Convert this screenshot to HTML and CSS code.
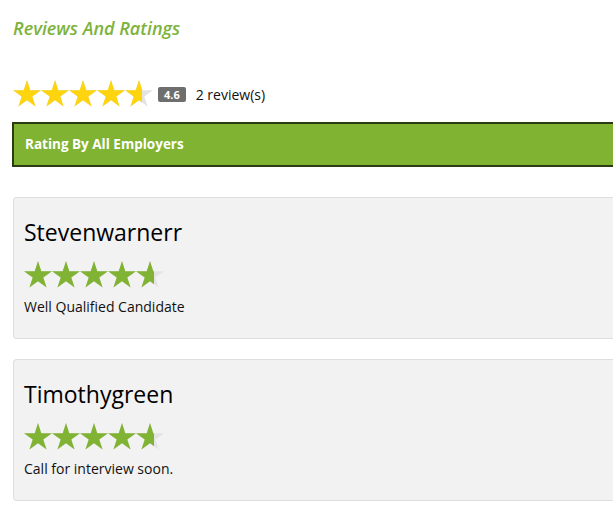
FILE: index.html
```html
<!DOCTYPE html>
<html lang="en">
<head>
<meta charset="utf-8">
<title>Reviews And Ratings</title>
<link rel="stylesheet" href="styles.css">
</head>
<body>
<div class="page">
  <h2 class="title">Reviews And Ratings</h2>

  <div class="summary">
    <svg class="stars" width="140" height="27" viewBox="0 0 140 27" aria-label="4.6 out of 5">
      <defs>
        <polygon id="st" points="14,0 17.3,10.2 28,10.2 19.3,16.4 22.6,26.6 14,20.3 5.4,26.6 8.7,16.4 0,10.2 10.7,10.2"/>
        <clipPath id="c0"><rect x="0" y="0" width="129" height="27"/></clipPath>
      </defs>
      <g class="bg">
        <use href="#st" x="0"/><use href="#st" x="28"/><use href="#st" x="56"/><use href="#st" x="84"/><use href="#st" x="112"/>
      </g>
      <g class="fg-gold" clip-path="url(#c0)">
        <use href="#st" x="0"/><use href="#st" x="28"/><use href="#st" x="56"/><use href="#st" x="84"/><use href="#st" x="112"/>
      </g>
    </svg>
    <span class="badge">4.6</span>
    <span class="count">2 review(s)</span>
  </div>

  <div class="bar">Rating By All Employers</div>

  <div class="card">
    <h3 class="name">Stevenwarnerr</h3>
    <svg class="stars" width="140" height="27" viewBox="0 0 140 27">
      <defs>
        <clipPath id="c1"><rect x="0" y="0" width="130" height="27"/></clipPath>
      </defs>
      <g class="bg">
        <use href="#st" x="0"/><use href="#st" x="28"/><use href="#st" x="56"/><use href="#st" x="84"/><use href="#st" x="112"/>
      </g>
      <g class="fg-green" clip-path="url(#c1)">
        <use href="#st" x="0"/><use href="#st" x="28"/><use href="#st" x="56"/><use href="#st" x="84"/><use href="#st" x="112"/>
      </g>
    </svg>
    <p class="comment">Well Qualified Candidate</p>
  </div>

  <div class="card">
    <h3 class="name">Timothygreen</h3>
    <svg class="stars" width="140" height="27" viewBox="0 0 140 27">
      <defs>
        <clipPath id="c2"><rect x="0" y="0" width="130" height="27"/></clipPath>
      </defs>
      <g class="bg">
        <use href="#st" x="0"/><use href="#st" x="28"/><use href="#st" x="56"/><use href="#st" x="84"/><use href="#st" x="112"/>
      </g>
      <g class="fg-green" clip-path="url(#c2)">
        <use href="#st" x="0"/><use href="#st" x="28"/><use href="#st" x="56"/><use href="#st" x="84"/><use href="#st" x="112"/>
      </g>
    </svg>
    <p class="comment">Call for interview soon.</p>
  </div>
</div>
</body>
</html>
```

FILE: styles.css
```css
html, body {
  margin: 0;
  padding: 0;
  overflow: hidden;
  background: #fff;
}
body {
  font-family: "Open Sans", "Liberation Sans", sans-serif;
  color: #222;
}
.page {
  width: 740px;
  padding: 0 0 0 12px;
}
.title {
  margin: 16px 0 0 1px;
  font-size: 18px;
  line-height: 25px;
  font-style: italic;
  font-weight: 600;
  color: #7db33c;
}
.summary {
  display: flex;
  align-items: center;
  margin-top: 38px;
  padding-left: 1px;
  height: 28px;
}
.stars {
  display: block;
  flex: none;
}
.bg use { fill: #e3e3e3; }
.fg-gold use { fill: #fdd40d; }
.fg-green use { fill: #80b334; }
.badge {
  margin-left: 5px;
  background: #6e6e6e;
  color: #fff;
  font-size: 11px;
  font-weight: 700;
  line-height: 15px;
  padding: 0 6px;
  border-radius: 2px;
  margin-top: 3px;
}
.count {
  margin-left: 10px;
  font-size: 14px;
  margin-top: 3px;
  color: #111;
}
.bar {
  margin-top: 15px;
  background: #80b332;
  border: 2px solid #2b3c12;
  border-right: 0;
  color: #fff;
  font-size: 13.5px;
  font-weight: 700;
  height: 41px;
  line-height: 41px;
  padding-left: 11px;
}
.card {
  margin: 30px 0 0 1px;
  background: #f2f2f2;
  border: 1px solid #dedede;
  border-right: 0;
  border-radius: 4px 0 0 4px;
  padding: 19px 0 22px 10px;
  height: 99px;
}
.card + .card {
  margin-top: 20px;
}
.name {
  margin: 0;
  font-size: 23px;
  font-weight: 500;
  line-height: 30px;
  color: #000;
}
.card .stars {
  margin-top: 14px;
}
.comment {
  margin: 9px 0 0;
  font-size: 14px;
  line-height: 19px;
  color: #111;
}
```
